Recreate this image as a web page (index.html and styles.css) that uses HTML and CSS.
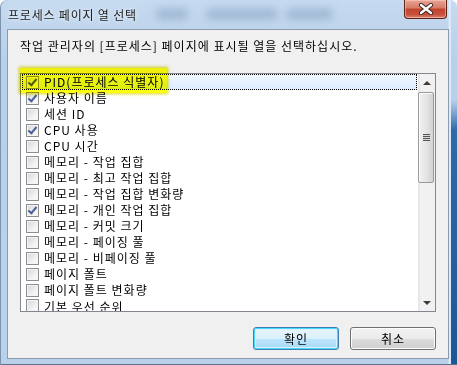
FILE: index.html
```html
<html>
    <head>
        <title>프로세스 페이지 열 선택</title>
        <link rel="stylesheet" href="styles.css">
    </head>
    <body>
        <div class="window">
            <div class="titlebar">
                <span class="title">프로세스 페이지 열 선택</span>
                <span class="blur blur-1"></span>
                <span class="blur blur-2"></span>
                <span class="blur blur-3"></span>
                <button class="close" aria-label="닫기">
                    <svg width="18" height="12" viewBox="0 0 18 12">
                        <path d="M4 2 L14 10 M14 2 L4 10" stroke="#3a2420" stroke-width="4.2" stroke-linecap="round" />
                        <path d="M4 2 L14 10 M14 2 L4 10" stroke="#ffffff" stroke-width="2.4" stroke-linecap="round" />
                    </svg>
                </button>
            </div>
            <div class="client">
                <p class="prompt">작업 관리자의 [프로세스] 페이지에 표시될 열을 선택하십시오.</p>
                <div class="listbox">
                    <ul class="items">
                        <li class="item selected"><span class="check on"></span>PID(프로세스 식별자)</li>
                        <li class="item"><span class="check on"></span>사용자 이름</li>
                        <li class="item"><span class="check"></span>세션 ID</li>
                        <li class="item"><span class="check on"></span>CPU 사용</li>
                        <li class="item"><span class="check"></span>CPU 시간</li>
                        <li class="item"><span class="check"></span>메모리 - 작업 집합</li>
                        <li class="item"><span class="check"></span>메모리 - 최고 작업 집합</li>
                        <li class="item"><span class="check"></span>메모리 - 작업 집합 변화량</li>
                        <li class="item"><span class="check on"></span>메모리 - 개인 작업 집합</li>
                        <li class="item"><span class="check"></span>메모리 - 커밋 크기</li>
                        <li class="item"><span class="check"></span>메모리 - 페이징 풀</li>
                        <li class="item"><span class="check"></span>메모리 - 비페이징 풀</li>
                        <li class="item"><span class="check"></span>페이지 폴트</li>
                        <li class="item"><span class="check"></span>페이지 폴트 변화량</li>
                        <li class="item last"><span class="check"></span>기본 우선 순위</li>
                    </ul>
                    <div class="scrollbar">
                        <span class="arrow up"></span>
                        <div class="track">
                            <div class="thumb"><span class="grip"></span></div>
                        </div>
                        <span class="arrow down"></span>
                    </div>
                </div>
                <div class="buttons">
                    <button class="btn default">확인</button>
                    <button class="btn">취소</button>
                </div>
            </div>
            <div class="highlight"></div>
        </div>
    </body>
</html>
```
FILE: styles.css
```css
body {
    margin: 0;
    width: 457px;
    height: 365px;
    overflow: hidden;
    font-family: "Noto Sans CJK KR", sans-serif;
    font-size: 12px;
    color: #000;
}

.window {
    position: relative;
    width: 457px;
    height: 365px;
    box-sizing: border-box;
    display: flex;
    flex-direction: column;
    padding: 0 8px 7px 7px;
    border-radius: 7px 7px 0 0;
    background:
        linear-gradient(90deg, transparent 448px, #dce9f6 449px, #dce9f6 451px, transparent 451px),
        linear-gradient(180deg, transparent 100px, #2f6aa8 130px, #1d5696 365px) right / 6px 100% no-repeat,
        linear-gradient(180deg, #c6daf0 0, #b8d0ea 60px, #b9d1eb 100%);
    box-shadow: inset 1px 0 0 #7d93ab, inset 0 -1px 0 #5b6f86;
}

.titlebar {
    position: relative;
    height: 29px;
    flex: none;
    display: flex;
    align-items: flex-start;
}

.title {
    margin: 6px 0 0 1px;
    font-size: 12px;
    letter-spacing: 0.8px;
    color: #1a1a1a;
    text-shadow: 0 0 6px #e8f1fb, 0 0 3px #e8f1fb;
    z-index: 1;
}

.blur {
    position: absolute;
    top: 9px;
    height: 10px;
    background: #8ea7c6;
    filter: blur(4px);
    opacity: 0.7;
}

.blur-1 { left: 150px; width: 30px; }
.blur-2 { left: 200px; width: 70px; }
.blur-3 { left: 280px; width: 45px; }

.close {
    position: absolute;
    top: 0;
    right: 2px;
    width: 43px;
    height: 19px;
    padding: 0;
    border: 1px solid #5c2419;
    border-top: none;
    border-radius: 0 0 4px 4px;
    background: linear-gradient(180deg, #e8a595 0, #d67a66 45%, #c2442c 50%, #c8503a 80%, #d98670 100%);
    box-shadow: inset 0 0 0 1px rgba(255, 210, 200, 0.5);
    display: flex;
    align-items: center;
    justify-content: center;
}

.client {
    flex: 1;
    display: flex;
    flex-direction: column;
    padding: 9px 12px 8px 12px;
    background: #f0f0f0;
    border: 1px solid #8b9cb0;
}

.prompt {
    margin: 0 0 20px 0;
    line-height: 14px;
    letter-spacing: 1px;
}

.listbox {
    height: 237px;
    display: flex;
    border: 1px solid #828790;
    background: #fff;
}

.items {
    flex: 1;
    margin: 0;
    padding: 0;
    list-style: none;
    overflow: hidden;
}

.item {
    display: flex;
    align-items: center;
    height: 16px;
    margin: 0 1px 0 1px;
    padding-left: 4px;
    box-sizing: border-box;
    column-gap: 5px;
    white-space: nowrap;
    line-height: 16px;
    letter-spacing: 1px;
}

.last {
    align-items: flex-start;
    padding-top: 1px;
}

.selected {
    background: linear-gradient(180deg, #f1f8ff 0, #dbecff 100%);
    outline: 1px dotted #000;
    outline-offset: -1px;
}

.check {
    position: relative;
    width: 11px;
    height: 11px;
    flex: none;
    border: 1px solid #8e8f8f;
    background: linear-gradient(135deg, #d6d6d6 0, #f4f4f4 70%, #ffffff 100%);
    box-shadow: inset 0 0 0 1px #f4f4f4;
}

.check.on::after {
    content: "";
    position: absolute;
    left: 3px;
    top: 0;
    width: 3px;
    height: 7px;
    border-right: 2px solid #4a5f97;
    border-bottom: 2px solid #4a5f97;
    transform: rotate(40deg);
}

.scrollbar {
    width: 17px;
    flex: none;
    display: flex;
    flex-direction: column;
    background: linear-gradient(90deg, #e3e3e3 0, #f2f2f2 3px, #f0f0f0 100%);
}

.arrow {
    height: 17px;
    flex: none;
    display: flex;
    align-items: center;
    justify-content: center;
}

.arrow::before {
    content: "";
    border-left: 4px solid transparent;
    border-right: 4px solid transparent;
}

.up::before {
    border-bottom: 4px solid #3c3c3c;
}

.down::before {
    border-top: 4px solid #3c3c3c;
}

.track {
    flex: 1;
    padding-top: 1px;
}

.thumb {
    height: 91px;
    margin: 0 1px 0 0;
    box-sizing: border-box;
    border: 1px solid #9a9a9a;
    border-radius: 2px;
    background: linear-gradient(90deg, #f0f0f0 0, #e6e6e6 50%, #d2d2d2 100%);
    box-shadow: inset 1px 1px 0 #fbfbfb;
    display: flex;
    align-items: center;
    justify-content: center;
}

.grip {
    width: 7px;
    height: 7px;
    background: repeating-linear-gradient(180deg, #555 0, #555 1px, #d8d8d8 1px, #d8d8d8 2px);
}

.buttons {
    display: flex;
    justify-content: flex-end;
    column-gap: 11px;
    margin-top: 15px;
}

.btn {
    width: 86px;
    height: 23px;
    padding: 0;
    font-family: "Noto Sans CJK KR", sans-serif;
    font-size: 12px;
    letter-spacing: 1px;
    color: #000;
    border: 1px solid #707070;
    border-radius: 3px;
    background: linear-gradient(180deg, #f2f2f2 0, #ebebeb 50%, #dddddd 50%, #cfcfcf 100%);
    box-shadow: inset 0 0 0 1px #fcfcfc;
}

.default {
    border-color: #3c7fb1;
    background: linear-gradient(180deg, #eaf6fd 0, #d9f0fc 50%, #bee6fd 50%, #a7d9f5 100%);
    box-shadow: inset 0 0 0 1px #48d8fb, inset 0 0 0 2px #d7f2fd;
}

.highlight {
    position: absolute;
    left: 20px;
    top: 68px;
    width: 147px;
    height: 25px;
    background: #ffff10;
    mix-blend-mode: multiply;
    box-shadow: 0 0 3px 1px #d8d820;
}
```
